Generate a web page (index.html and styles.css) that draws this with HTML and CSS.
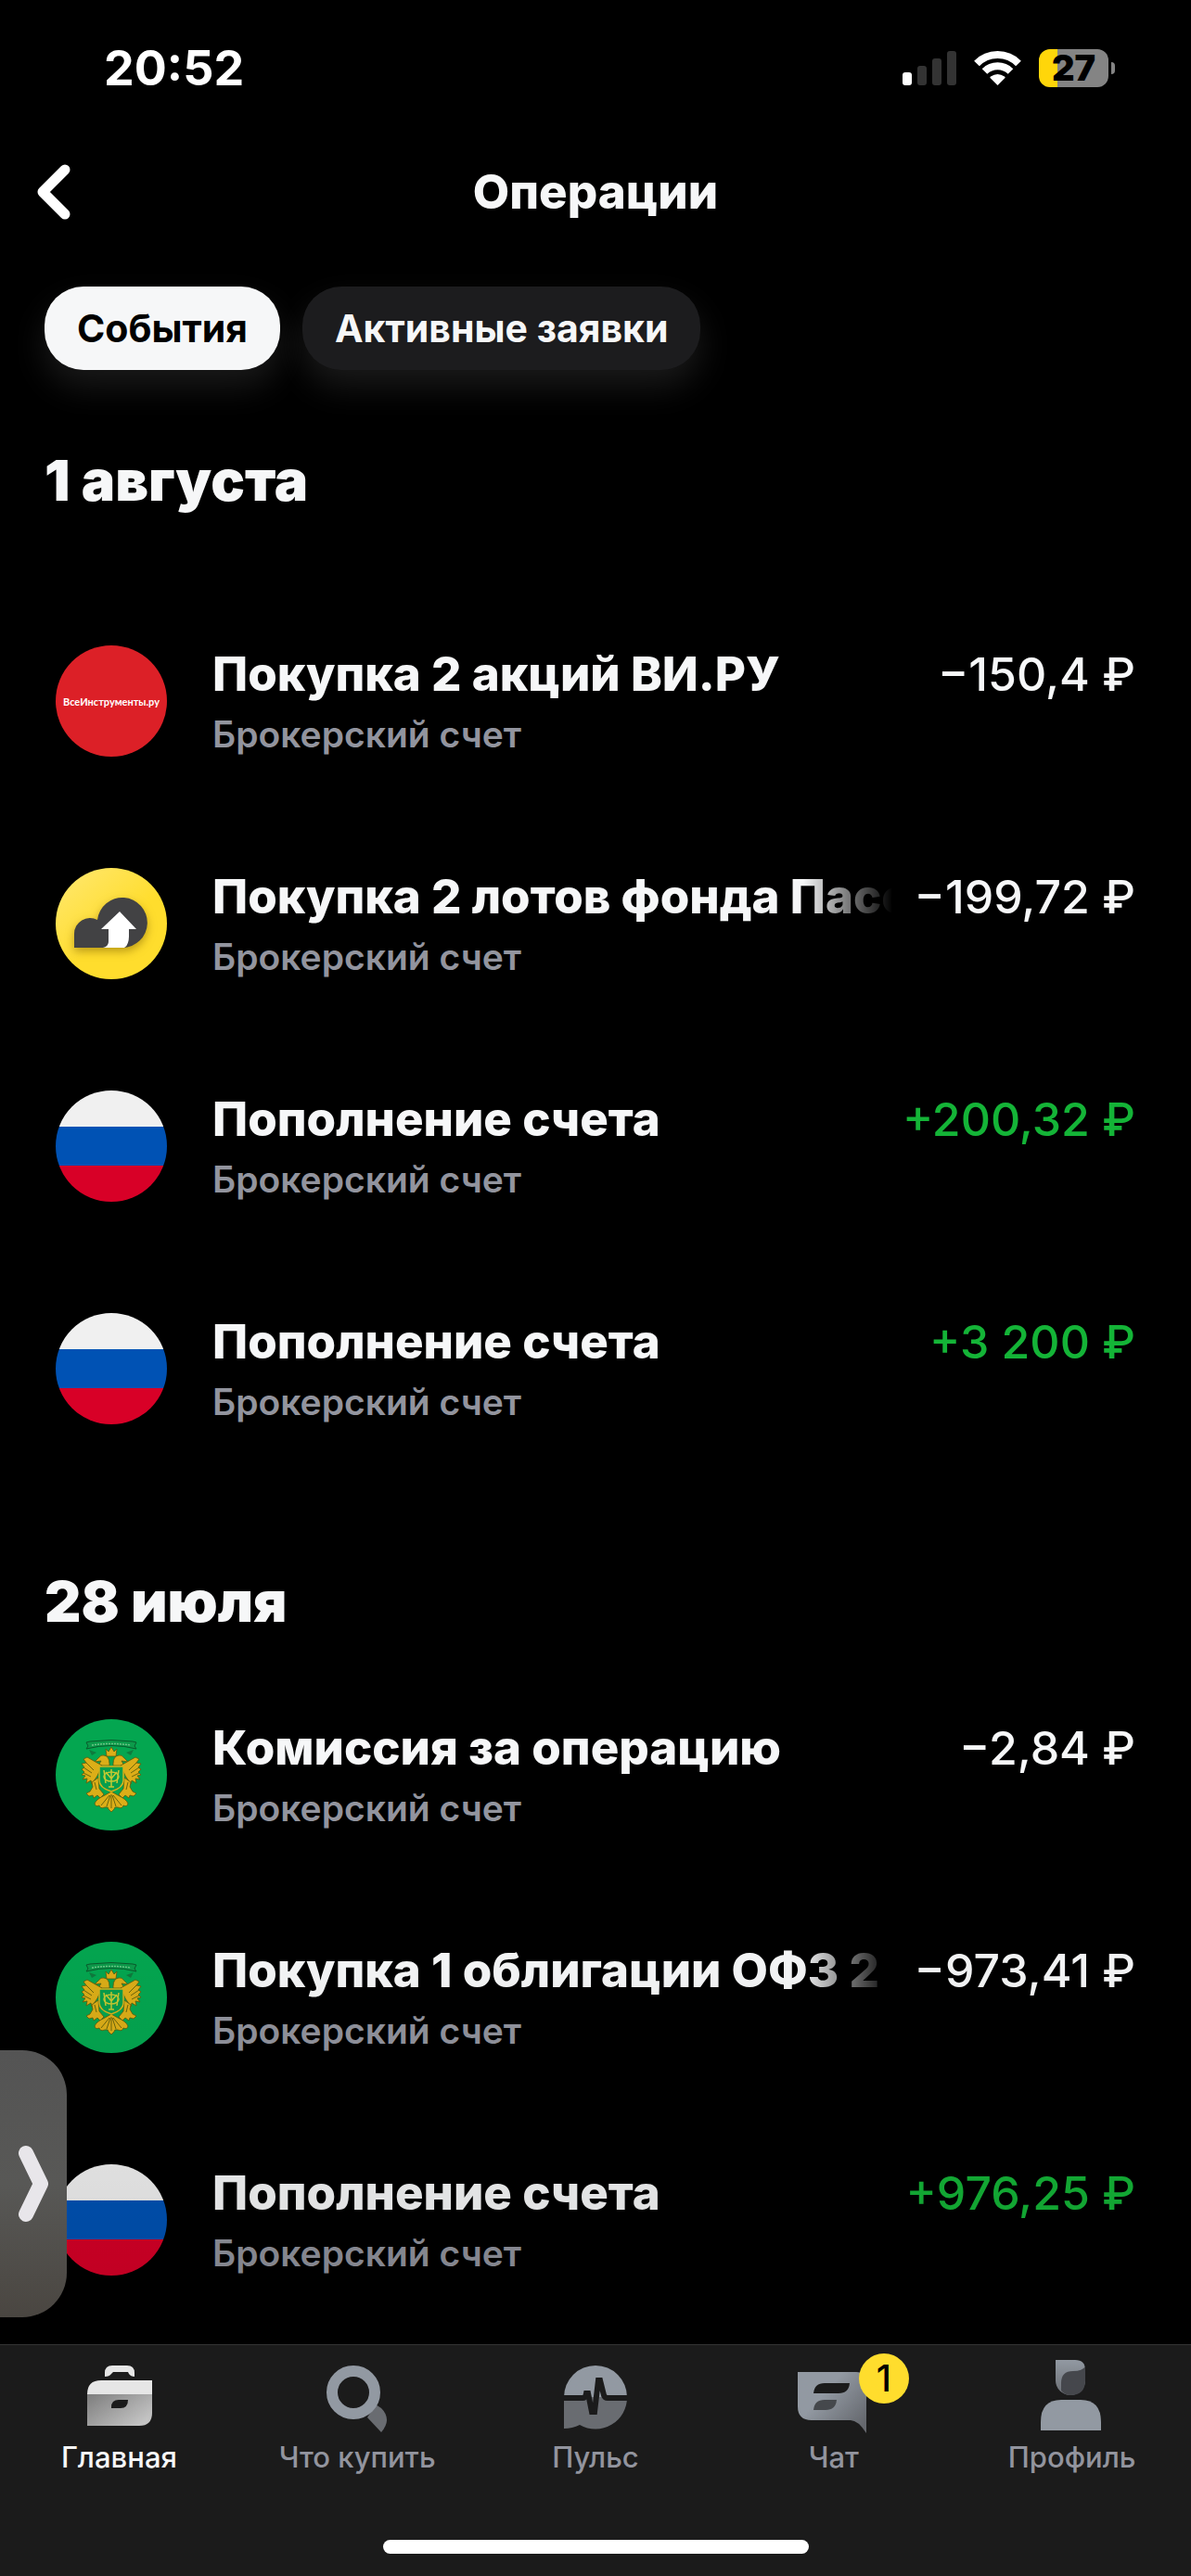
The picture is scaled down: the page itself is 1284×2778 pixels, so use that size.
FILE: index.html
```html
<!DOCTYPE html>
<html lang="ru">
<head>
<meta charset="utf-8">
<meta name="viewport" content="width=device-width, initial-scale=1">
<title>Операции</title>
<link rel="stylesheet" href="styles.css">
</head>
<body>
<svg class="defs" width="0" height="0" aria-hidden="true">
  <defs>
    <linearGradient id="yellow" x1="0" y1="0" x2="0.5" y2="0.6"><stop offset="0" stop-color="#ffe873"/><stop offset="1" stop-color="#ffdd2d"/></linearGradient>
    <linearGradient id="case" x1="0" y1="0" x2="1" y2="0.7"><stop offset="0" stop-color="#7d7d7d"/><stop offset="1" stop-color="#c4c4c4"/></linearGradient>
    <linearGradient id="bubble" x1="0" y1="0" x2="1" y2="0.8"><stop offset="0.4" stop-color="#9299a2"/><stop offset="1" stop-color="#65686e"/></linearGradient>
    <linearGradient id="hair" x1="0" y1="0" x2="0" y2="1"><stop offset="0" stop-color="#9299a2"/><stop offset="1" stop-color="#6b6f75"/></linearGradient>
    <symbol id="flag" viewBox="0 0 120 120">
      <path fill="#f0f0f0" d="M0 0h120v39H0z"/><path fill="#0052b4" d="M0 39h120v42H0z"/><path fill="#d80027" d="M0 81h120v39H0z"/>
    </symbol>
    <symbol id="emblem" viewBox="0 0 120 120">
      <path fill="#04a650" d="M0 0h120v120H0z"/>
      <path d="M33 25l4-1q23-3 46 0l4 1-2 4 2 3q-27-7-54 0l2-3z" fill="#0c9a4a" stroke="#0a5a2c" stroke-width="1"/>
      <path d="M39 28q21-3 42 0" fill="none" stroke="#6cc587" stroke-width="1.500" stroke-dasharray="2 1"/>
      <path d="M36 33l8 3-5 3zM84 33l-8 3 5 3z" fill="#0f7a3d"/>
      <g fill="#dcae18" stroke="#5e5a0c" stroke-width="0.800">
        <path d="M54 32l3 3 3-5 3 5 3-3-1 8H55z"/>
        <path d="M58 48q0-8-6-9-3-1-6 3l-4 4 7-1-3 5h12zM62 48q0-8 6-9 3-1 6 3l4 4-7-1 3 5H62z"/>
        <path d="M50 50L34 41l-4 2 3 4-5 1 3 4-3 2 3 3-3 3 4 1-3 4 5-1-1 5 5-3 1 4 6-9zM70 50l16-9 4 2-3 4 5 1-3 4 3 2-3 3 3 3-4 1 3 4-5-1 1 5-5-3-1 4-6-9z"/>
        <path d="M46 63l-7 5 1 5-3 5-4 2 3 3 4-1 1 3 4-3 3 3 4-4-5-6zM74 63l7 5-1 5 3 5 4 2-3 3-4-1-1 3-4-3-3 3-4-4 5-6z"/>
        <path d="M60 78l-7 4q-9 4-11 9 1 4 5 2 1 4 6 2 4-1 4 2l3 3 3-3q0-3 4-2 5 2 6-2 4 2 5-2-2-5-11-9z"/>
      </g>
      <path d="M58 82l-9 11M59 82l-4 12M60 81v15M61 82l4 12M62 82l9 11M32 46l9 9M30 52l9 6M30 58l8 4M88 46l-9 9M90 52l-9 6M90 58l-8 4M42 68l2 8M78 68l-2 8" stroke="#6a650c" fill="none" stroke-width="1"/>
      <path d="M47 51h26v15q0 8-13 12-13-4-13-12z" fill="#079e4c" stroke="#d9b21b" stroke-width="1.500"/>
      <path d="M52 55l2 14M68 55l-2 14M54 57l6 7 6-7M60 54v19M57 73h6" fill="none" stroke="#c6c932" stroke-width="1.500"/>
      <ellipse cx="60" cy="62" rx="8" ry="5" fill="none" stroke="#c6c932" stroke-width="1.500"/>
    </symbol>
  </defs>
</svg>

<div class="screen">
  <div class="status">
    <time class="clock">20:52</time>
    <div class="indicators">
      <svg width="58" height="38" viewBox="0 0 58 38" aria-hidden="true">
        <rect y="23" width="10" height="14" rx="3" fill="#fff"/>
        <rect x="16" y="16" width="10" height="21" rx="3" fill="#333"/>
        <rect x="32" y="8" width="10" height="29" rx="3" fill="#333"/>
        <rect x="48" width="10" height="37" rx="3" fill="#333"/>
      </svg>
      <svg width="51" height="38" viewBox="0 0 51 38" aria-hidden="true">
        <g fill="none" stroke="#fff" stroke-width="8">
          <path d="M3 13.500a31.500 31.500 0 0 1 45 0"/>
          <path d="M11.500 22a20 20 0 0 1 28 0"/>
        </g>
        <path fill="#fff" d="M25.500 37l-8-8q-.5-1 .5-1.500 7.500-5 15 0 1 .5.500 1.500z"/>
      </svg>
      <div class="battery"><span class="battery-level">27</span></div>
    </div>
  </div>

  <header class="header">
    <button class="back" type="button" aria-label="Назад">
      <svg width="44" height="68" viewBox="0 0 44 68" aria-hidden="true"><path d="M34 10L10 34l24 24" fill="none" stroke="#fff" stroke-width="11" stroke-linecap="round" stroke-linejoin="round"/></svg>
    </button>
    <h1 class="title">Операции</h1>
  </header>

  <div class="chips">
    <button class="chip chip-active" type="button">События</button>
    <button class="chip" type="button">Активные заявки</button>
  </div>

  <main class="feed">
    <section class="day day-first">
      <h2 class="date">1 августа</h2>
      <ul class="list">
        <li class="row">
          <div class="logo logo-red">ВсеИнструменты.ру</div>
          <div class="info">
            <div class="line"><span class="name">Покупка 2 акций ВИ.РУ</span><span class="amount">−150,4 ₽</span></div>
            <div class="account">Брокерский счет</div>
          </div>
        </li>
        <li class="row">
          <svg class="logo" viewBox="0 0 120 120" aria-hidden="true">
            <path fill="url(#yellow)" d="M0 0h120v120H0z"/>
            <path class="cloud" fill="#424244" d="M20 86V71a17 17 0 0 1 25-15 27 27 0 1 1 27 30z"/>
            <path fill="#fff" d="M69 47l18 19h-8v8q0 9-5 12H51q6-1 6-7V66h-8z"/>
          </svg>
          <div class="info">
            <div class="line"><span class="name">Покупка 2 лотов фонда Пасс</span><span class="amount">−199,72 ₽</span></div>
            <div class="account">Брокерский счет</div>
          </div>
        </li>
        <li class="row">
          <svg class="logo" aria-hidden="true"><use href="#flag"/></svg>
          <div class="info">
            <div class="line"><span class="name">Пополнение счета</span><span class="amount amount-in">+200,32 ₽</span></div>
            <div class="account">Брокерский счет</div>
          </div>
        </li>
        <li class="row">
          <svg class="logo" aria-hidden="true"><use href="#flag"/></svg>
          <div class="info">
            <div class="line"><span class="name">Пополнение счета</span><span class="amount amount-in">+3 200 ₽</span></div>
            <div class="account">Брокерский счет</div>
          </div>
        </li>
      </ul>
    </section>

    <section class="day">
      <h2 class="date">28 июля</h2>
      <ul class="list">
        <li class="row">
          <svg class="logo" aria-hidden="true"><use href="#emblem"/></svg>
          <div class="info">
            <div class="line"><span class="name">Комиссия за операцию</span><span class="amount">−2,84 ₽</span></div>
            <div class="account">Брокерский счет</div>
          </div>
        </li>
        <li class="row">
          <svg class="logo" aria-hidden="true"><use href="#emblem"/></svg>
          <div class="info">
            <div class="line"><span class="name">Покупка 1 облигации ОФЗ 2</span><span class="amount">−973,41 ₽</span></div>
            <div class="account">Брокерский счет</div>
          </div>
        </li>
        <li class="row">
          <svg class="logo" aria-hidden="true"><use href="#flag"/></svg>
          <div class="info">
            <div class="line"><span class="name">Пополнение счета</span><span class="amount amount-in">+976,25 ₽</span></div>
            <div class="account">Брокерский счет</div>
          </div>
        </li>
      </ul>
    </section>
    <button class="drawer" type="button" aria-label="Открыть панель">
      <svg width="36" height="88" viewBox="0 0 36 88" aria-hidden="true"><path d="M10 11l16 33-16 33" fill="none" stroke="#e8e6ea" stroke-width="16" stroke-linecap="round" stroke-linejoin="round"/></svg>
    </button>
  </main>

  <footer class="footer">
    <nav class="tabs">
      <a class="tab tab-active" href="#home">
        <svg class="tab-icon" viewBox="0 0 84 84" aria-hidden="true">
          <path fill="#e6e6e6" d="M27 23v-4q0-8 8-8h16q8 0 8 8v4q-4 0-6-3l-1-2H36l-2 2q-2 3-7 3zM8 42q0-15 15-15h55v15z"/>
          <path fill="url(#case)" d="M8 42h70v20q0 14-14 14H8z"/>
          <path fill="#1b1b1b" d="M34 57v-1q0-8 8-8h10q0 9-8 9z"/>
        </svg>
        Главная
      </a>
      <a class="tab" href="#market">
        <svg class="tab-icon" viewBox="0 0 84 84" aria-hidden="true">
          <path fill="#696c71" d="M53 67l15 16q12-14 0-26l-6-4z"/>
          <circle cx="38" cy="40" r="23" fill="none" stroke="#9299a2" stroke-width="12"/>
        </svg>
        Что купить
      </a>
      <a class="tab" href="#pulse">
        <svg class="tab-icon" viewBox="0 0 84 84" aria-hidden="true">
          <path fill="#9299a2" d="M8 45a34 34 0 0 1 68 0z"/>
          <path fill="#696c71" d="M8 45h68a34 34 0 0 1-51 30q-8 4-17 4z"/>
          <path d="M6 46h23q2 0 3-5h2l4 20h3l4-34h2l4 16q1 3 4 3h23" fill="none" stroke="#1b1b1b" stroke-width="6"/>
        </svg>
        Пульс
      </a>
      <a class="tab" href="#chat">
        <span class="tab-figure">
          <svg class="tab-icon" viewBox="0 0 84 84" aria-hidden="true">
            <path fill="url(#bubble)" d="M3 18h63q11 0 11 11v55Q68 70 60 70H18Q3 70 3 55z"/>
            <path fill="#1b1b1b" d="M20 41q1-11 12-11h27q-1 11-12 11z"/>
            <path fill="#45484c" d="M20 59q1-11 12-11h13q-1 11-12 11z"/>
          </svg>
          <span class="badge">1</span>
        </span>
        Чат
      </a>
      <a class="tab" href="#profile">
        <svg class="tab-icon" viewBox="0 0 84 84" aria-hidden="true">
          <path fill="url(#hair)" d="M24 5h21q11 0 11 11v11a16 16 0 0 1-32 0z"/>
          <path fill="#45474c" d="M30 38V30q0-13 13-13 10 0 13-5v15q0 16-16 16-6 0-10-5z"/>
          <path fill="#9299a2" d="M8 81V72q0-24 22-24h21q22 0 22 24v9z"/>
        </svg>
        Профиль
      </a>
    </nav>
    <div class="home-bar"></div>
  </footer>
</div>
</body>
</html>
```

FILE: styles.css
```css
* {
  box-sizing: border-box;
}

body {
  margin: 0;
  background: #000;
  color: #f6f7f8;
  font-family: Inter, "Liberation Sans", sans-serif;
}

button {
  border: 0;
  padding: 0;
  background: none;
  color: inherit;
  font: inherit;
}

.defs {
  position: absolute;
}

.screen {
  display: flex;
  flex-direction: column;
  min-height: 100vh;
}

/* Status bar */
.status {
  display: flex;
  align-items: center;
  justify-content: space-between;
  height: 147px;
  padding: 0 89px 0 112px;
}

.clock {
  color: #fff;
  font-size: 52px;
  font-weight: 700;
  line-height: 60px;
}

.indicators {
  display: flex;
  align-items: center;
  gap: 19px;
}

.battery {
  position: relative;
  width: 75px;
  height: 41px;
  border-radius: 12px;
  background: linear-gradient(90deg, #ffd60a 27%, #848484 27%);
  color: #000;
  font-size: 38px;
  font-weight: 900;
  line-height: 41px;
  text-align: center;
}

.battery::after {
  content: "";
  position: absolute;
  top: 14px;
  left: 78px;
  width: 4px;
  height: 13px;
  border-radius: 0 4px 4px 0;
  background: #848484;
}

/* Header */
.header {
  display: grid;
  grid-template-columns: 1fr auto 1fr;
  align-items: center;
  height: 120px;
  padding: 0 36px;
}

.back {
  display: flex;
  justify-self: start;
}

.title {
  margin: 0;
  font-size: 51px;
  font-weight: 800;
  line-height: 60px;
}

.chips {
  display: flex;
  gap: 24px;
  padding: 42px 48px 0;
}

.chip {
  height: 90px;
  padding: 0 35px;
  border-radius: 42px;
  background: #1c1c1e;
  box-shadow: 0 18px 36px rgba(255, 255, 255, 0.1);
  font-size: 41px;
  font-weight: 700;
}

.chip-active {
  background: #f6f7f8;
  color: #000;
}

/* Operations */
.feed {
  position: relative;
  flex: 1;
}

.feed::after {
  content: "";
  position: absolute;
  inset: auto 0 0;
  height: 480px;
  background: linear-gradient(transparent, rgba(0, 0, 0, 0.12));
  pointer-events: none;
}

.day {
  padding-top: 95px;
}

.day-first {
  padding-top: 83px;
}

.date {
  margin: 0;
  padding: 0 48px;
  font-size: 61px;
  font-weight: 900;
  line-height: 72px;
}

.list {
  margin: 0;
  padding: 31px 60px 0;
  list-style: none;
}

.day-first .list {
  padding-top: 82px;
}

.row {
  display: flex;
  gap: 49px;
  padding: 60px 0;
}

.logo {
  flex: none;
  width: 120px;
  height: 120px;
  border-radius: 50%;
  overflow: hidden;
}

.logo-red {
  display: flex;
  align-items: center;
  justify-content: center;
  background: #dc2027;
  color: #fff;
  font-family: Lato, sans-serif;
  font-size: 11px;
  font-weight: 700;
}

.cloud {
  filter: drop-shadow(0 4px 5px rgba(120, 90, 0, 0.5));
}

.info {
  flex: 1;
  min-width: 0;
}

.line {
  display: flex;
  gap: 24px;
  margin-bottom: 10px;
  font-size: 51px;
  line-height: 62px;
  white-space: nowrap;
}

.name {
  flex: 1;
  min-width: 0;
  overflow: hidden;
  font-weight: 800;
  mask-image: linear-gradient(270deg, transparent, #000 96px);
}

.amount {
  font-size: 50px;
  font-weight: 500;
}

.amount-in {
  color: #14b437;
}

.account {
  color: #92949e;
  font-size: 39px;
  font-weight: 600;
  line-height: 48px;
}

.drawer {
  position: absolute;
  z-index: 1;
  bottom: 29px;
  left: 0;
  display: flex;
  align-items: center;
  justify-content: flex-end;
  width: 72px;
  height: 288px;
  padding-right: 18px;
  border-radius: 0 48px 48px 0;
  background: linear-gradient(#545454, #585856 50%, #4a4641);
}

/* Bottom navigation */
.footer {
  display: flex;
  flex-direction: column;
  align-items: center;
  justify-content: space-between;
  height: 250px;
  padding: 11px 0 24px;
  border-top: 1px solid #333;
  background: #1b1b1b;
}

.tabs {
  display: grid;
  grid-template-columns: repeat(5, 1fr);
  width: 100%;
}

.tab {
  display: flex;
  flex-direction: column;
  align-items: center;
  gap: 8px;
  color: #92949e;
  font-size: 31px;
  font-weight: 500;
  line-height: 36px;
  text-decoration: none;
}

.tab-active {
  color: #f6f7f8;
}

.tab-figure {
  position: relative;
  display: flex;
}

.tab-icon {
  width: 84px;
  height: 84px;
}

.badge {
  position: absolute;
  top: -2px;
  left: 69px;
  width: 54px;
  height: 54px;
  border-radius: 50%;
  background: #ffdd2d;
  color: #000;
  font-size: 39px;
  line-height: 54px;
  text-align: center;
}

.home-bar {
  width: 459px;
  height: 15px;
  border-radius: 8px;
  background: #fff;
}
```
